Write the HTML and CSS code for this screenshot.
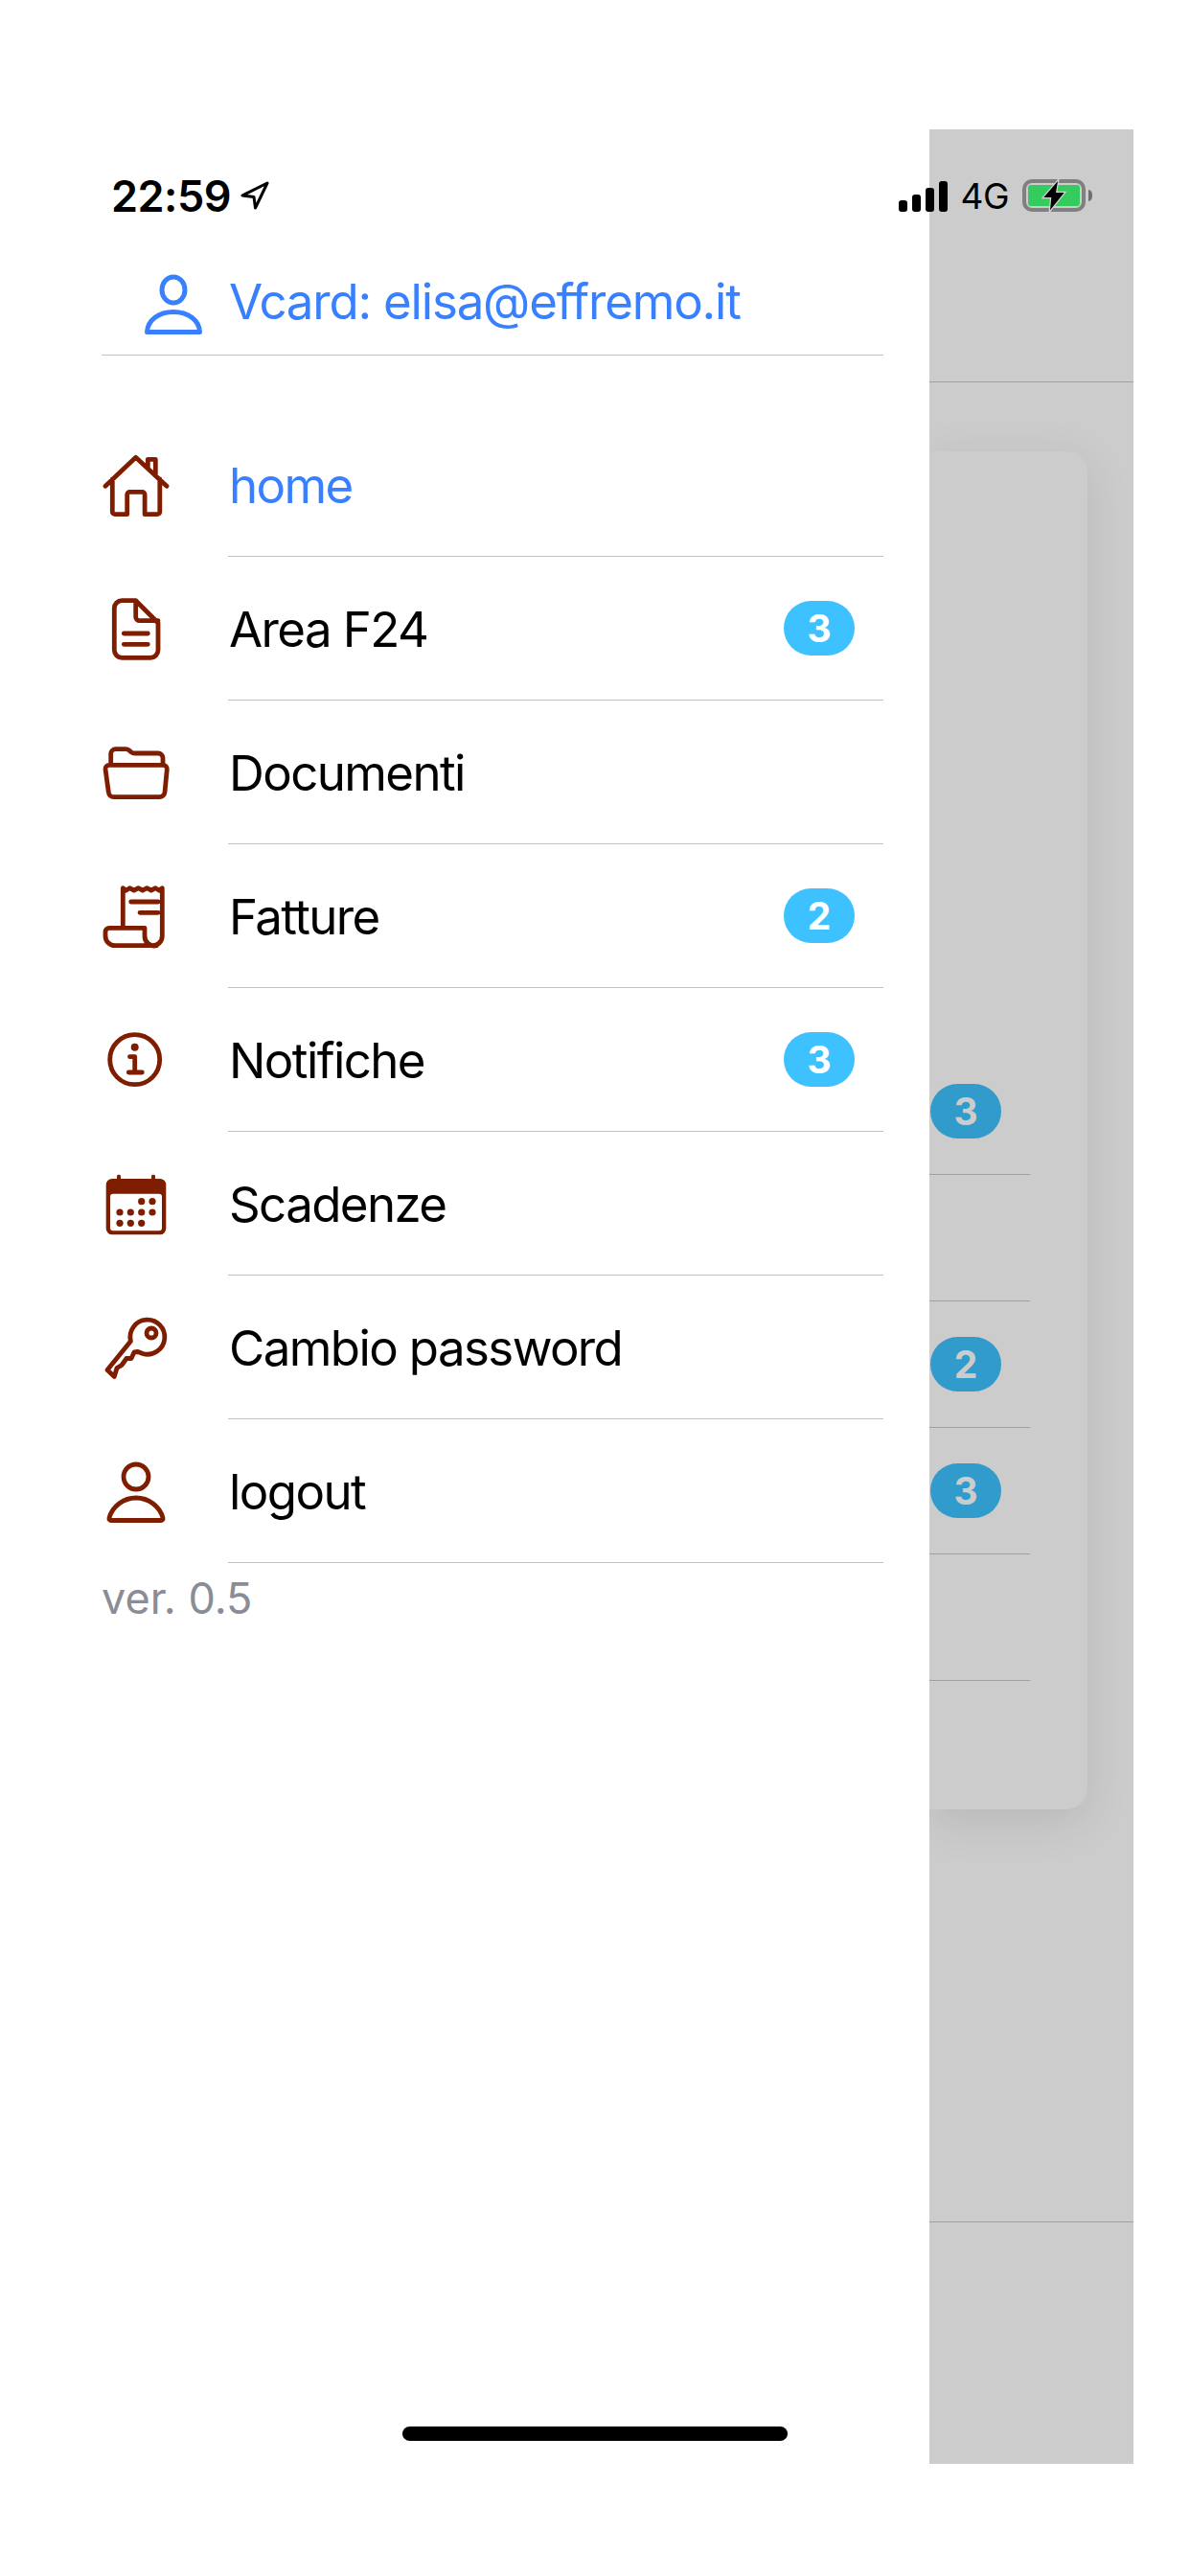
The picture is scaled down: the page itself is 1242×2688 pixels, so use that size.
FILE: index.html
```html
<!DOCTYPE html>
<html lang="en">

<head>
    <meta charset="UTF-8">
    <meta name="viewport" content="width=device-width, initial-scale=1.0">
    <title>Menu</title>
    <link rel="stylesheet" href="styles.css">
</head>

<body>
    <div class="screen">
        <div class="status-bar">
            <span class="time">22:59</span>
            <svg class="location" viewBox="0 0 30 30" width="30" height="30">
                <path d="M28 2 2 15l12 1.500L15.500 28z" fill="none" stroke="#000" stroke-width="3" stroke-linejoin="round" />
            </svg>
            <div class="status-right">
                <div class="signal">
                    <span class="bar bar-1"></span>
                    <span class="bar bar-2"></span>
                    <span class="bar bar-3"></span>
                    <span class="bar bar-4"></span>
                </div>
                <span class="network">4G</span>
                <svg viewBox="0 0 74 36" width="74" height="36">
                    <rect x="2" y="3" width="62" height="30" rx="8" fill="none" stroke="#808080" stroke-width="4" />
                    <rect x="6" y="7" width="54" height="22" rx="3" fill="#35cc5e" />
                    <path d="M69 12c3 .5 4 3 4 6s-1 5.500-4 6z" fill="#6e6e6e" />
                    <path d="M37 3 22.300 20h8L29 33.300 43.700 15H35z" fill="#000" stroke="#d4d4d4" stroke-width="2.500" paint-order="stroke" />
                </svg>
            </div>
        </div>

        <nav class="drawer">
            <div class="drawer-header">
                <svg class="header-icon" viewBox="0 0 60 64" width="60" height="64">
                    <ellipse cx="30" cy="16.500" rx="12" ry="13.500" fill="none" stroke="#3880ff" stroke-width="5" />
                    <path d="M2.500 60.500C3 48 15 39.500 30 39.500S57 48 57.500 60.500z" fill="none" stroke="#3880ff" stroke-width="5" stroke-linejoin="round" />
                </svg>
                <span class="header-title">Vcard: elisa@effremo.it</span>
            </div>

            <div class="menu-list">
                <a class="menu-item">
                    <svg class="menu-icon" viewBox="0 0 72 72">
                        <path d="M4 37.300 35.700 7.300 68 37.300M48.300 19V9.300h8V26M11.300 30v34a2.700 2.700 0 0 0 2.700 2.700h12.700V46a2.700 2.700 0 0 1 2.700-2.700h13a2.700 2.700 0 0 1 2.700 2.700v20.700h13a2.700 2.700 0 0 0 2.700-2.700V30" />
                    </svg>
                    <div class="item-inner">
                        <span class="item-label active">home</span>
                    </div>
                </a>
                <a class="menu-item">
                    <svg class="menu-icon" viewBox="0 0 72 72">
                        <path d="M35.700 6.700H21.300a8 8 0 0 0-8 8v43.600a8 8 0 0 0 8 8h29.700a8 8 0 0 0 8-8V30zM35.700 6.700v17a4 4 0 0 0 4 4H59M23.300 41h25M23.300 52.300h25" />
                    </svg>
                    <div class="item-inner">
                        <span class="item-label">Area F24</span>
                        <span class="badge">3</span>
                    </div>
                </a>
                <a class="menu-item">
                    <svg class="menu-icon" viewBox="0 0 72 72">
                        <path d="M9.700 26.700V16.700a5 5 0 0 1 5-5h10.500a6 6 0 0 1 3.500 1.200l2.300 1.900a6 6 0 0 0 3.500 1.200H59a5 5 0 0 1 5 5v6M8 28.300h56.300a4 4 0 0 1 4 4.300l-2.300 24a5.500 5.500 0 0 1-5.500 5H12.800a5.500 5.500 0 0 1-5.500-5L4 32.600a4 4 0 0 1 4-4.300z" />
                    </svg>
                    <div class="item-inner">
                        <span class="item-label">Documenti</span>
                    </div>
                </a>
                <a class="menu-item">
                    <svg class="menu-icon" viewBox="0 0 72 72">
                        <path d="M22.300 46.700V6.700l3 2.500 4-2.500 4.500 2.500 4.500-2.500 4.500 2.500 4.500-2.500 4.500 2.500 4.500-2.500 4 2.500 3-2.500v50a10 10 0 0 1-11 10M30.700 21H59M40 32.300h19M4 52.300a4 4 0 0 1 4-4h37v8.400a10 10 0 0 0 12.300 10H14a10 10 0 0 1-10-10z" />
                    </svg>
                    <div class="item-inner">
                        <span class="item-label">Fatture</span>
                        <span class="badge">2</span>
                    </div>
                </a>
                <a class="menu-item">
                    <svg class="menu-icon" viewBox="0 0 72 72">
                        <circle cx="34.700" cy="35.700" r="26" />
                        <path d="M29.500 32.700h5.200V49M28.300 49h14" />
                        <circle class="solid" cx="34.700" cy="22.700" r="4" />
                    </svg>
                    <div class="item-inner">
                        <span class="item-label">Notifiche</span>
                        <span class="badge">3</span>
                    </div>
                </a>
                <a class="menu-item">
                    <svg class="menu-icon" viewBox="0 0 72 72">
                        <path class="solid" fill-rule="evenodd" d="M11 10h50a6.300 6.300 0 0 1 6.300 6.300v45.700a6.300 6.300 0 0 1-6.300 6.300H11a6.300 6.300 0 0 1-6.300-6.300V16.300A6.300 6.300 0 0 1 11 10zM12 25.700a3 3 0 0 0-3 3v32.600a3 3 0 0 0 3 3h48a3 3 0 0 0 3-3V28.700a3 3 0 0 0-3-3z" />
                        <rect class="solid" x="16" y="5.700" width="4" height="6" rx="1.500" />
                        <rect class="solid" x="52" y="5.700" width="4" height="6" rx="1.500" />
                        <circle class="solid" cx="41.700" cy="33.700" r="3.600" />
                        <circle class="solid" cx="53" cy="33.700" r="3.600" />
                        <circle class="solid" cx="19" cy="45" r="3.600" />
                        <circle class="solid" cx="30.300" cy="45" r="3.600" />
                        <circle class="solid" cx="41.700" cy="45" r="3.600" />
                        <circle class="solid" cx="53" cy="45" r="3.600" />
                        <circle class="solid" cx="19" cy="56.300" r="3.600" />
                        <circle class="solid" cx="30.300" cy="56.300" r="3.600" />
                        <circle class="solid" cx="41.700" cy="56.300" r="3.600" />
                    </svg>
                    <div class="item-inner">
                        <span class="item-label">Scadenze</span>
                    </div>
                </a>
                <a class="menu-item">
                    <svg class="menu-icon" viewBox="0 0 72 72">
                        <path d="M30.400 29.500A18 18 0 1 1 43 42.500L38 40.500 34 41 31 47.500 26 47.500 21 54.500 16 57.500 13.300 66.500 6 59.500z" />
                        <circle cx="52" cy="21" r="5" />
                    </svg>
                    <div class="item-inner">
                        <span class="item-label">Cambio password</span>
                    </div>
                </a>
                <a class="menu-item">
                    <svg class="menu-icon" viewBox="0 0 72 72">
                        <circle cx="36" cy="21" r="13" />
                        <path d="M10 66.500h52a2 2 0 0 0 2-2.500C61 52 49 43 36 43S11 52 8 64a2 2 0 0 0 2 2.500z" />
                    </svg>
                    <div class="item-inner">
                        <span class="item-label">logout</span>
                    </div>
                </a>
            </div>
            <p class="version">ver. 0.5</p>
        </nav>

        <div class="backdrop">
            <div class="page-header"></div>
            <div class="page-content">
                <div class="card">
                    <div class="card-row"><span class="badge">3</span></div>
                    <div class="card-row"></div>
                    <div class="card-row"><span class="badge">2</span></div>
                    <div class="card-row"><span class="badge">3</span></div>
                    <div class="card-row"></div>
                </div>
            </div>
            <div class="page-footer"></div>
        </div>

        <div class="home-bar"></div>
    </div>
</body>

</html>
```

FILE: styles.css
```css
* {
    margin: 0;
    padding: 0;
    box-sizing: border-box;
}

body {
    font-family: Inter, "Liberation Sans", sans-serif;
    background-color: #fff;
    height: 2688px;
    overflow: hidden;
}

.screen {
    position: relative;
    display: flex;
    width: 1125px;
    height: 2436px;
    margin: 135px 0 0 58px;
}

/* status bar sits on top of both the drawer and the backdrop */
.status-bar {
    position: absolute;
    top: 0;
    left: 0;
    width: 100%;
    height: 138px;
    padding: 0 42px 0 58px;
    display: flex;
    align-items: center;
}

.time {
    font-size: 45px;
    font-weight: 600;
    letter-spacing: -0.5px;
    color: #000;
}

.location {
    margin-left: 10px;
}

.status-right {
    margin-left: auto;
    display: flex;
    align-items: center;
}

.signal {
    display: flex;
    align-items: flex-end;
    gap: 5px;
    height: 32px;
    margin-top: 1px;
}

.bar {
    width: 9px;
    background-color: #000;
    border-radius: 3px;
}

.bar-1 {
    height: 12px;
}

.bar-2 {
    height: 18px;
}

.bar-3 {
    height: 25px;
}

.bar-4 {
    height: 32px;
}

.network {
    font-size: 37px;
    letter-spacing: -0.5px;
    color: #000;
    margin: 0 14px 0 13px;
}

.drawer {
    width: 912px;
    flex-shrink: 0;
    padding: 0 48px;
    background-color: #fff;
}

.drawer-header {
    height: 236px;
    padding: 150px 0 0 45px;
    display: flex;
    align-items: flex-start;
    border-bottom: 1px solid #c2c2c6;
}

.header-icon {
    flex-shrink: 0;
    margin-top: 1px;
}

.header-title {
    margin-left: 28px;
    font-size: 51px;
    letter-spacing: -1.2px;
    line-height: 62px;
    margin-top: -1px;
    color: #3880ff;
}

.menu-list {
    margin-top: 60px;
}

.menu-item {
    display: flex;
    align-items: center;
    height: 150px;
}

.menu-icon {
    width: 72px;
    height: 72px;
    flex-shrink: 0;
    margin-right: 60px;
    fill: none;
    stroke: #7f1d00;
    stroke-width: 4.8;
    stroke-linecap: round;
    stroke-linejoin: round;
}

.menu-icon .solid {
    fill: #7f1d00;
    stroke: none;
}

.item-inner {
    flex: 1;
    height: 100%;
    padding-right: 30px;
    display: flex;
    align-items: center;
    justify-content: space-between;
    border-bottom: 1px solid #c2c2c6;
}

.item-label {
    font-size: 51px;
    letter-spacing: -1.6px;
    margin: 2px 0 0 1px;
    color: #000;
}

.item-label.active {
    color: #3880ff;
}

.badge {
    min-width: 74px;
    height: 57px;
    border-radius: 29px;
    background-color: #3dc2ff;
    color: #fff;
    font-size: 39px;
    font-weight: 700;
    line-height: 57px;
    text-align: center;
}

.version {
    margin-top: 9px;
    font-size: 45px;
    color: #8a8c96;
}

.backdrop {
    flex: 1;
    display: flex;
    flex-direction: column;
    overflow: hidden;
    background-color: #ccc;
}

.page-header {
    height: 264px;
    border-bottom: 1px solid #a0a0a3;
}

.page-content {
    flex: 1;
    padding-top: 72px;
}

.card {
    width: 165px;
    height: 1417px;
    padding-top: 623px;
    background-color: #ccc;
    border-radius: 0 22px 22px 0;
    box-shadow: 0 12px 48px rgba(0, 0, 0, 0.1);
}

.card-row {
    width: 105px;
    height: 132px;
    display: flex;
    align-items: center;
    border-bottom: 1px solid #a0a0a3;
}

.card .badge {
    margin-left: 1px;
    background-color: #319bcc;
    color: #ccc;
}

.page-footer {
    height: 253px;
    border-top: 1px solid #a0a0a3;
}

.home-bar {
    position: absolute;
    left: 362px;
    bottom: 24px;
    width: 402px;
    height: 15px;
    background-color: #000;
    border-radius: 8px;
}
```
